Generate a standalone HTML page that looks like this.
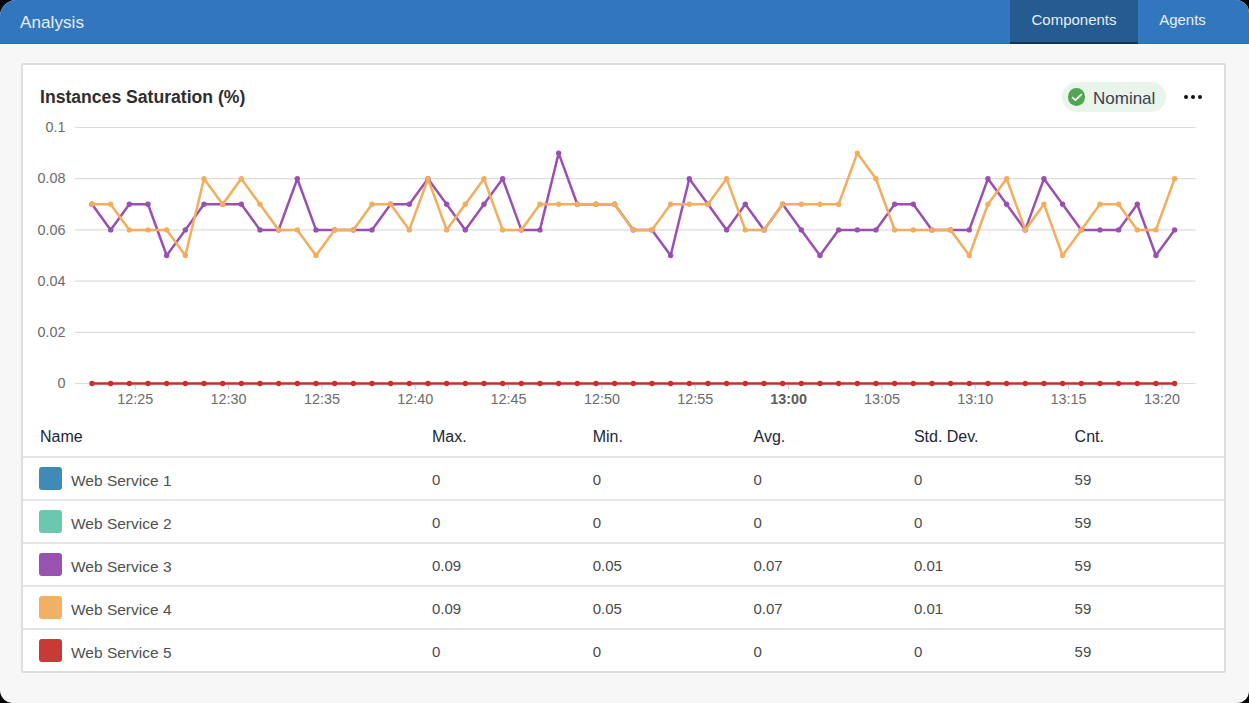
<!DOCTYPE html>
<html><head><meta charset="utf-8"><style>
html,body{margin:0;padding:0;background:#000;width:1249px;height:703px;overflow:hidden}
*{box-sizing:border-box}
#app{position:absolute;left:0;top:0;width:1249px;height:703px;background:#f7f7f7;border-radius:16px 13px 12px 13px;overflow:hidden;font-family:"Liberation Sans",sans-serif}
#hdr{position:absolute;left:0;top:0;width:1249px;height:44px;background:#3277bd;border-bottom:1px solid #2c6db3}
#title{position:absolute;left:20px;top:12px;font-size:17.2px;line-height:20px;color:#e6edf6}
.tab{position:absolute;top:0;height:44px;font-size:15px;line-height:20px;color:#e9eff7;padding-top:10.4px;text-align:center}
#t1{left:1010px;width:128px;background:#265b91;border-bottom:2px solid #12345a}
#t2{left:1138px;width:89px}
#card{position:absolute;left:21px;top:63px;width:1205px;height:610px;background:#fff;border:2px solid #dedede;border-radius:2px}
#ctitle{position:absolute;left:40px;top:87px;font-size:17.6px;line-height:20px;font-weight:bold;color:#2e2e2e}
#badge{position:absolute;left:1062px;top:82px;width:104px;height:30px;border-radius:15px;background:#e9f4ea}
#chk{position:absolute;left:1067.5px;top:88.3px;width:17.5px;height:17.5px;border-radius:50%;background:#52a653}
#nom{position:absolute;left:1093px;top:89px;font-size:17px;line-height:20px;color:#3a3f55}
.dot{position:absolute;top:95px;width:4px;height:4px;border-radius:50%;background:#111}
.th{position:absolute;top:427px;font-size:16px;line-height:20px;color:#23263a}
.row{position:absolute;left:23px;width:1201px;height:2px;background:#e6e6e6}
.sw{position:absolute;left:39px;width:23px;height:23px;border-radius:3px}
.nm{position:absolute;left:71px;font-size:15.5px;line-height:20px;padding-top:14px;color:#505050}
.val{position:absolute;font-size:15px;line-height:20px;padding-top:13px;color:#4a4a4a}
</style></head><body>
<div id="app">
<div id="hdr"><div id="title">Analysis</div>
<div class="tab" id="t1">Components</div><div class="tab" id="t2">Agents</div></div>
<div id="card"></div>
<div id="ctitle">Instances Saturation (%)</div>
<div id="badge"></div><div id="chk"><svg width="18" height="18" viewBox="0 0 18 18"><path d="M4.6 9.6 L7.5 12.2 L13.2 6.6" fill="none" stroke="#fff" stroke-width="1.7" stroke-linecap="round" stroke-linejoin="round"/></svg></div>
<div id="nom">Nominal</div>
<div class="dot" style="left:1184px"></div><div class="dot" style="left:1191px"></div><div class="dot" style="left:1198px"></div>
<svg width="1249" height="703" style="position:absolute;left:0;top:0">
<g><line x1="75" y1="383.50" x2="1195.5" y2="383.50" stroke="#dcdcdc" stroke-width="1.2"/><line x1="75" y1="332.30" x2="1195.5" y2="332.30" stroke="#dcdcdc" stroke-width="1.2"/><line x1="75" y1="281.10" x2="1195.5" y2="281.10" stroke="#dcdcdc" stroke-width="1.2"/><line x1="75" y1="229.90" x2="1195.5" y2="229.90" stroke="#dcdcdc" stroke-width="1.2"/><line x1="75" y1="178.70" x2="1195.5" y2="178.70" stroke="#dcdcdc" stroke-width="1.2"/><line x1="75" y1="127.50" x2="1195.5" y2="127.50" stroke="#dcdcdc" stroke-width="1.2"/><line x1="135.31" y1="385" x2="135.31" y2="389.5" stroke="#cfcfcf" stroke-width="1"/><line x1="228.63" y1="385" x2="228.63" y2="389.5" stroke="#cfcfcf" stroke-width="1"/><line x1="321.96" y1="385" x2="321.96" y2="389.5" stroke="#cfcfcf" stroke-width="1"/><line x1="415.29" y1="385" x2="415.29" y2="389.5" stroke="#cfcfcf" stroke-width="1"/><line x1="508.62" y1="385" x2="508.62" y2="389.5" stroke="#cfcfcf" stroke-width="1"/><line x1="601.94" y1="385" x2="601.94" y2="389.5" stroke="#cfcfcf" stroke-width="1"/><line x1="695.27" y1="385" x2="695.27" y2="389.5" stroke="#cfcfcf" stroke-width="1"/><line x1="788.60" y1="385" x2="788.60" y2="389.5" stroke="#cfcfcf" stroke-width="1"/><line x1="881.93" y1="385" x2="881.93" y2="389.5" stroke="#cfcfcf" stroke-width="1"/><line x1="975.26" y1="385" x2="975.26" y2="389.5" stroke="#cfcfcf" stroke-width="1"/><line x1="1068.58" y1="385" x2="1068.58" y2="389.5" stroke="#cfcfcf" stroke-width="1"/><line x1="1161.91" y1="385" x2="1161.91" y2="389.5" stroke="#cfcfcf" stroke-width="1"/></g>
<g font-family="Liberation Sans, sans-serif" font-size="14.4" fill="#6b6b6b"><text x="65.5" y="388.10" text-anchor="end">0</text><text x="65.5" y="336.90" text-anchor="end">0.02</text><text x="65.5" y="285.70" text-anchor="end">0.04</text><text x="65.5" y="234.50" text-anchor="end">0.06</text><text x="65.5" y="183.30" text-anchor="end">0.08</text><text x="65.5" y="132.10" text-anchor="end">0.1</text><text x="135.31" y="403.8" text-anchor="middle">12:25</text><text x="228.63" y="403.8" text-anchor="middle">12:30</text><text x="321.96" y="403.8" text-anchor="middle">12:35</text><text x="415.29" y="403.8" text-anchor="middle">12:40</text><text x="508.62" y="403.8" text-anchor="middle">12:45</text><text x="601.94" y="403.8" text-anchor="middle">12:50</text><text x="695.27" y="403.8" text-anchor="middle">12:55</text><text x="788.60" y="403.8" text-anchor="middle" font-weight="bold" fill="#5c5c5c">13:00</text><text x="881.93" y="403.8" text-anchor="middle">13:05</text><text x="975.26" y="403.8" text-anchor="middle">13:10</text><text x="1068.58" y="403.8" text-anchor="middle">13:15</text><text x="1161.91" y="403.8" text-anchor="middle">13:20</text></g>
<polyline points="92.00,204.30 110.67,229.90 129.33,204.30 148.00,204.30 166.66,255.50 185.33,229.90 203.99,204.30 222.66,204.30 241.32,204.30 259.99,229.90 278.66,229.90 297.32,178.70 315.99,229.90 334.65,229.90 353.32,229.90 371.98,229.90 390.65,204.30 409.31,204.30 427.98,178.70 446.64,204.30 465.31,229.90 483.98,204.30 502.64,178.70 521.31,229.90 539.97,229.90 558.64,153.10 577.30,204.30 595.97,204.30 614.63,204.30 633.30,229.90 651.97,229.90 670.63,255.50 689.30,178.70 707.96,204.30 726.63,229.90 745.29,204.30 763.96,229.90 782.62,204.30 801.29,229.90 819.96,255.50 838.62,229.90 857.29,229.90 875.95,229.90 894.62,204.30 913.28,204.30 931.95,229.90 950.61,229.90 969.28,229.90 987.94,178.70 1006.61,204.30 1025.28,229.90 1043.94,178.70 1062.61,204.30 1081.27,229.90 1099.94,229.90 1118.60,229.90 1137.27,204.30 1155.93,255.50 1174.60,229.90" fill="none" stroke="#9a50b1" stroke-width="2.5" stroke-linejoin="round"/><circle cx="92.00" cy="204.30" r="2.7" fill="#9a50b1"/><circle cx="110.67" cy="229.90" r="2.7" fill="#9a50b1"/><circle cx="129.33" cy="204.30" r="2.7" fill="#9a50b1"/><circle cx="148.00" cy="204.30" r="2.7" fill="#9a50b1"/><circle cx="166.66" cy="255.50" r="2.7" fill="#9a50b1"/><circle cx="185.33" cy="229.90" r="2.7" fill="#9a50b1"/><circle cx="203.99" cy="204.30" r="2.7" fill="#9a50b1"/><circle cx="222.66" cy="204.30" r="2.7" fill="#9a50b1"/><circle cx="241.32" cy="204.30" r="2.7" fill="#9a50b1"/><circle cx="259.99" cy="229.90" r="2.7" fill="#9a50b1"/><circle cx="278.66" cy="229.90" r="2.7" fill="#9a50b1"/><circle cx="297.32" cy="178.70" r="2.7" fill="#9a50b1"/><circle cx="315.99" cy="229.90" r="2.7" fill="#9a50b1"/><circle cx="334.65" cy="229.90" r="2.7" fill="#9a50b1"/><circle cx="353.32" cy="229.90" r="2.7" fill="#9a50b1"/><circle cx="371.98" cy="229.90" r="2.7" fill="#9a50b1"/><circle cx="390.65" cy="204.30" r="2.7" fill="#9a50b1"/><circle cx="409.31" cy="204.30" r="2.7" fill="#9a50b1"/><circle cx="427.98" cy="178.70" r="2.7" fill="#9a50b1"/><circle cx="446.64" cy="204.30" r="2.7" fill="#9a50b1"/><circle cx="465.31" cy="229.90" r="2.7" fill="#9a50b1"/><circle cx="483.98" cy="204.30" r="2.7" fill="#9a50b1"/><circle cx="502.64" cy="178.70" r="2.7" fill="#9a50b1"/><circle cx="521.31" cy="229.90" r="2.7" fill="#9a50b1"/><circle cx="539.97" cy="229.90" r="2.7" fill="#9a50b1"/><circle cx="558.64" cy="153.10" r="2.7" fill="#9a50b1"/><circle cx="577.30" cy="204.30" r="2.7" fill="#9a50b1"/><circle cx="595.97" cy="204.30" r="2.7" fill="#9a50b1"/><circle cx="614.63" cy="204.30" r="2.7" fill="#9a50b1"/><circle cx="633.30" cy="229.90" r="2.7" fill="#9a50b1"/><circle cx="651.97" cy="229.90" r="2.7" fill="#9a50b1"/><circle cx="670.63" cy="255.50" r="2.7" fill="#9a50b1"/><circle cx="689.30" cy="178.70" r="2.7" fill="#9a50b1"/><circle cx="707.96" cy="204.30" r="2.7" fill="#9a50b1"/><circle cx="726.63" cy="229.90" r="2.7" fill="#9a50b1"/><circle cx="745.29" cy="204.30" r="2.7" fill="#9a50b1"/><circle cx="763.96" cy="229.90" r="2.7" fill="#9a50b1"/><circle cx="782.62" cy="204.30" r="2.7" fill="#9a50b1"/><circle cx="801.29" cy="229.90" r="2.7" fill="#9a50b1"/><circle cx="819.96" cy="255.50" r="2.7" fill="#9a50b1"/><circle cx="838.62" cy="229.90" r="2.7" fill="#9a50b1"/><circle cx="857.29" cy="229.90" r="2.7" fill="#9a50b1"/><circle cx="875.95" cy="229.90" r="2.7" fill="#9a50b1"/><circle cx="894.62" cy="204.30" r="2.7" fill="#9a50b1"/><circle cx="913.28" cy="204.30" r="2.7" fill="#9a50b1"/><circle cx="931.95" cy="229.90" r="2.7" fill="#9a50b1"/><circle cx="950.61" cy="229.90" r="2.7" fill="#9a50b1"/><circle cx="969.28" cy="229.90" r="2.7" fill="#9a50b1"/><circle cx="987.94" cy="178.70" r="2.7" fill="#9a50b1"/><circle cx="1006.61" cy="204.30" r="2.7" fill="#9a50b1"/><circle cx="1025.28" cy="229.90" r="2.7" fill="#9a50b1"/><circle cx="1043.94" cy="178.70" r="2.7" fill="#9a50b1"/><circle cx="1062.61" cy="204.30" r="2.7" fill="#9a50b1"/><circle cx="1081.27" cy="229.90" r="2.7" fill="#9a50b1"/><circle cx="1099.94" cy="229.90" r="2.7" fill="#9a50b1"/><circle cx="1118.60" cy="229.90" r="2.7" fill="#9a50b1"/><circle cx="1137.27" cy="204.30" r="2.7" fill="#9a50b1"/><circle cx="1155.93" cy="255.50" r="2.7" fill="#9a50b1"/><circle cx="1174.60" cy="229.90" r="2.7" fill="#9a50b1"/><polyline points="92.00,204.30 110.67,204.30 129.33,229.90 148.00,229.90 166.66,229.90 185.33,255.50 203.99,178.70 222.66,204.30 241.32,178.70 259.99,204.30 278.66,229.90 297.32,229.90 315.99,255.50 334.65,229.90 353.32,229.90 371.98,204.30 390.65,204.30 409.31,229.90 427.98,178.70 446.64,229.90 465.31,204.30 483.98,178.70 502.64,229.90 521.31,229.90 539.97,204.30 558.64,204.30 577.30,204.30 595.97,204.30 614.63,204.30 633.30,229.90 651.97,229.90 670.63,204.30 689.30,204.30 707.96,204.30 726.63,178.70 745.29,229.90 763.96,229.90 782.62,204.30 801.29,204.30 819.96,204.30 838.62,204.30 857.29,153.10 875.95,178.70 894.62,229.90 913.28,229.90 931.95,229.90 950.61,229.90 969.28,255.50 987.94,204.30 1006.61,178.70 1025.28,229.90 1043.94,204.30 1062.61,255.50 1081.27,229.90 1099.94,204.30 1118.60,204.30 1137.27,229.90 1155.93,229.90 1174.60,178.70" fill="none" stroke="#f2ad5e" stroke-width="2.5" stroke-linejoin="round"/><circle cx="92.00" cy="204.30" r="2.7" fill="#f2ad5e"/><circle cx="110.67" cy="204.30" r="2.7" fill="#f2ad5e"/><circle cx="129.33" cy="229.90" r="2.7" fill="#f2ad5e"/><circle cx="148.00" cy="229.90" r="2.7" fill="#f2ad5e"/><circle cx="166.66" cy="229.90" r="2.7" fill="#f2ad5e"/><circle cx="185.33" cy="255.50" r="2.7" fill="#f2ad5e"/><circle cx="203.99" cy="178.70" r="2.7" fill="#f2ad5e"/><circle cx="222.66" cy="204.30" r="2.7" fill="#f2ad5e"/><circle cx="241.32" cy="178.70" r="2.7" fill="#f2ad5e"/><circle cx="259.99" cy="204.30" r="2.7" fill="#f2ad5e"/><circle cx="278.66" cy="229.90" r="2.7" fill="#f2ad5e"/><circle cx="297.32" cy="229.90" r="2.7" fill="#f2ad5e"/><circle cx="315.99" cy="255.50" r="2.7" fill="#f2ad5e"/><circle cx="334.65" cy="229.90" r="2.7" fill="#f2ad5e"/><circle cx="353.32" cy="229.90" r="2.7" fill="#f2ad5e"/><circle cx="371.98" cy="204.30" r="2.7" fill="#f2ad5e"/><circle cx="390.65" cy="204.30" r="2.7" fill="#f2ad5e"/><circle cx="409.31" cy="229.90" r="2.7" fill="#f2ad5e"/><circle cx="427.98" cy="178.70" r="2.7" fill="#f2ad5e"/><circle cx="446.64" cy="229.90" r="2.7" fill="#f2ad5e"/><circle cx="465.31" cy="204.30" r="2.7" fill="#f2ad5e"/><circle cx="483.98" cy="178.70" r="2.7" fill="#f2ad5e"/><circle cx="502.64" cy="229.90" r="2.7" fill="#f2ad5e"/><circle cx="521.31" cy="229.90" r="2.7" fill="#f2ad5e"/><circle cx="539.97" cy="204.30" r="2.7" fill="#f2ad5e"/><circle cx="558.64" cy="204.30" r="2.7" fill="#f2ad5e"/><circle cx="577.30" cy="204.30" r="2.7" fill="#f2ad5e"/><circle cx="595.97" cy="204.30" r="2.7" fill="#f2ad5e"/><circle cx="614.63" cy="204.30" r="2.7" fill="#f2ad5e"/><circle cx="633.30" cy="229.90" r="2.7" fill="#f2ad5e"/><circle cx="651.97" cy="229.90" r="2.7" fill="#f2ad5e"/><circle cx="670.63" cy="204.30" r="2.7" fill="#f2ad5e"/><circle cx="689.30" cy="204.30" r="2.7" fill="#f2ad5e"/><circle cx="707.96" cy="204.30" r="2.7" fill="#f2ad5e"/><circle cx="726.63" cy="178.70" r="2.7" fill="#f2ad5e"/><circle cx="745.29" cy="229.90" r="2.7" fill="#f2ad5e"/><circle cx="763.96" cy="229.90" r="2.7" fill="#f2ad5e"/><circle cx="782.62" cy="204.30" r="2.7" fill="#f2ad5e"/><circle cx="801.29" cy="204.30" r="2.7" fill="#f2ad5e"/><circle cx="819.96" cy="204.30" r="2.7" fill="#f2ad5e"/><circle cx="838.62" cy="204.30" r="2.7" fill="#f2ad5e"/><circle cx="857.29" cy="153.10" r="2.7" fill="#f2ad5e"/><circle cx="875.95" cy="178.70" r="2.7" fill="#f2ad5e"/><circle cx="894.62" cy="229.90" r="2.7" fill="#f2ad5e"/><circle cx="913.28" cy="229.90" r="2.7" fill="#f2ad5e"/><circle cx="931.95" cy="229.90" r="2.7" fill="#f2ad5e"/><circle cx="950.61" cy="229.90" r="2.7" fill="#f2ad5e"/><circle cx="969.28" cy="255.50" r="2.7" fill="#f2ad5e"/><circle cx="987.94" cy="204.30" r="2.7" fill="#f2ad5e"/><circle cx="1006.61" cy="178.70" r="2.7" fill="#f2ad5e"/><circle cx="1025.28" cy="229.90" r="2.7" fill="#f2ad5e"/><circle cx="1043.94" cy="204.30" r="2.7" fill="#f2ad5e"/><circle cx="1062.61" cy="255.50" r="2.7" fill="#f2ad5e"/><circle cx="1081.27" cy="229.90" r="2.7" fill="#f2ad5e"/><circle cx="1099.94" cy="204.30" r="2.7" fill="#f2ad5e"/><circle cx="1118.60" cy="204.30" r="2.7" fill="#f2ad5e"/><circle cx="1137.27" cy="229.90" r="2.7" fill="#f2ad5e"/><circle cx="1155.93" cy="229.90" r="2.7" fill="#f2ad5e"/><circle cx="1174.60" cy="178.70" r="2.7" fill="#f2ad5e"/><polyline points="92.00,383.50 110.67,383.50 129.33,383.50 148.00,383.50 166.66,383.50 185.33,383.50 203.99,383.50 222.66,383.50 241.32,383.50 259.99,383.50 278.66,383.50 297.32,383.50 315.99,383.50 334.65,383.50 353.32,383.50 371.98,383.50 390.65,383.50 409.31,383.50 427.98,383.50 446.64,383.50 465.31,383.50 483.98,383.50 502.64,383.50 521.31,383.50 539.97,383.50 558.64,383.50 577.30,383.50 595.97,383.50 614.63,383.50 633.30,383.50 651.97,383.50 670.63,383.50 689.30,383.50 707.96,383.50 726.63,383.50 745.29,383.50 763.96,383.50 782.62,383.50 801.29,383.50 819.96,383.50 838.62,383.50 857.29,383.50 875.95,383.50 894.62,383.50 913.28,383.50 931.95,383.50 950.61,383.50 969.28,383.50 987.94,383.50 1006.61,383.50 1025.28,383.50 1043.94,383.50 1062.61,383.50 1081.27,383.50 1099.94,383.50 1118.60,383.50 1137.27,383.50 1155.93,383.50 1174.60,383.50" fill="none" stroke="#c9302c" stroke-width="2.5" stroke-linejoin="round"/><circle cx="92.00" cy="383.50" r="2.7" fill="#c9302c"/><circle cx="110.67" cy="383.50" r="2.7" fill="#c9302c"/><circle cx="129.33" cy="383.50" r="2.7" fill="#c9302c"/><circle cx="148.00" cy="383.50" r="2.7" fill="#c9302c"/><circle cx="166.66" cy="383.50" r="2.7" fill="#c9302c"/><circle cx="185.33" cy="383.50" r="2.7" fill="#c9302c"/><circle cx="203.99" cy="383.50" r="2.7" fill="#c9302c"/><circle cx="222.66" cy="383.50" r="2.7" fill="#c9302c"/><circle cx="241.32" cy="383.50" r="2.7" fill="#c9302c"/><circle cx="259.99" cy="383.50" r="2.7" fill="#c9302c"/><circle cx="278.66" cy="383.50" r="2.7" fill="#c9302c"/><circle cx="297.32" cy="383.50" r="2.7" fill="#c9302c"/><circle cx="315.99" cy="383.50" r="2.7" fill="#c9302c"/><circle cx="334.65" cy="383.50" r="2.7" fill="#c9302c"/><circle cx="353.32" cy="383.50" r="2.7" fill="#c9302c"/><circle cx="371.98" cy="383.50" r="2.7" fill="#c9302c"/><circle cx="390.65" cy="383.50" r="2.7" fill="#c9302c"/><circle cx="409.31" cy="383.50" r="2.7" fill="#c9302c"/><circle cx="427.98" cy="383.50" r="2.7" fill="#c9302c"/><circle cx="446.64" cy="383.50" r="2.7" fill="#c9302c"/><circle cx="465.31" cy="383.50" r="2.7" fill="#c9302c"/><circle cx="483.98" cy="383.50" r="2.7" fill="#c9302c"/><circle cx="502.64" cy="383.50" r="2.7" fill="#c9302c"/><circle cx="521.31" cy="383.50" r="2.7" fill="#c9302c"/><circle cx="539.97" cy="383.50" r="2.7" fill="#c9302c"/><circle cx="558.64" cy="383.50" r="2.7" fill="#c9302c"/><circle cx="577.30" cy="383.50" r="2.7" fill="#c9302c"/><circle cx="595.97" cy="383.50" r="2.7" fill="#c9302c"/><circle cx="614.63" cy="383.50" r="2.7" fill="#c9302c"/><circle cx="633.30" cy="383.50" r="2.7" fill="#c9302c"/><circle cx="651.97" cy="383.50" r="2.7" fill="#c9302c"/><circle cx="670.63" cy="383.50" r="2.7" fill="#c9302c"/><circle cx="689.30" cy="383.50" r="2.7" fill="#c9302c"/><circle cx="707.96" cy="383.50" r="2.7" fill="#c9302c"/><circle cx="726.63" cy="383.50" r="2.7" fill="#c9302c"/><circle cx="745.29" cy="383.50" r="2.7" fill="#c9302c"/><circle cx="763.96" cy="383.50" r="2.7" fill="#c9302c"/><circle cx="782.62" cy="383.50" r="2.7" fill="#c9302c"/><circle cx="801.29" cy="383.50" r="2.7" fill="#c9302c"/><circle cx="819.96" cy="383.50" r="2.7" fill="#c9302c"/><circle cx="838.62" cy="383.50" r="2.7" fill="#c9302c"/><circle cx="857.29" cy="383.50" r="2.7" fill="#c9302c"/><circle cx="875.95" cy="383.50" r="2.7" fill="#c9302c"/><circle cx="894.62" cy="383.50" r="2.7" fill="#c9302c"/><circle cx="913.28" cy="383.50" r="2.7" fill="#c9302c"/><circle cx="931.95" cy="383.50" r="2.7" fill="#c9302c"/><circle cx="950.61" cy="383.50" r="2.7" fill="#c9302c"/><circle cx="969.28" cy="383.50" r="2.7" fill="#c9302c"/><circle cx="987.94" cy="383.50" r="2.7" fill="#c9302c"/><circle cx="1006.61" cy="383.50" r="2.7" fill="#c9302c"/><circle cx="1025.28" cy="383.50" r="2.7" fill="#c9302c"/><circle cx="1043.94" cy="383.50" r="2.7" fill="#c9302c"/><circle cx="1062.61" cy="383.50" r="2.7" fill="#c9302c"/><circle cx="1081.27" cy="383.50" r="2.7" fill="#c9302c"/><circle cx="1099.94" cy="383.50" r="2.7" fill="#c9302c"/><circle cx="1118.60" cy="383.50" r="2.7" fill="#c9302c"/><circle cx="1137.27" cy="383.50" r="2.7" fill="#c9302c"/><circle cx="1155.93" cy="383.50" r="2.7" fill="#c9302c"/><circle cx="1174.60" cy="383.50" r="2.7" fill="#c9302c"/>
</svg>
<div class="th" style="left:40px">Name</div><div class="th" style="left:432px">Max.</div><div class="th" style="left:592.7px">Min.</div><div class="th" style="left:753.5px">Avg.</div><div class="th" style="left:913.9px">Std. Dev.</div><div class="th" style="left:1074.6px">Cnt.</div>
<div class="row" style="top:456px"></div><div class="sw" style="top:467px;background:#3f8bb6"></div><div class="nm" style="top:457px">Web Service 1</div><div class="val" style="top:457px;left:432px">0</div><div class="val" style="top:457px;left:592.7px">0</div><div class="val" style="top:457px;left:753.5px">0</div><div class="val" style="top:457px;left:913.9px">0</div><div class="val" style="top:457px;left:1074.6px">59</div><div class="row" style="top:499px"></div><div class="sw" style="top:510px;background:#6cc7b1"></div><div class="nm" style="top:500px">Web Service 2</div><div class="val" style="top:500px;left:432px">0</div><div class="val" style="top:500px;left:592.7px">0</div><div class="val" style="top:500px;left:753.5px">0</div><div class="val" style="top:500px;left:913.9px">0</div><div class="val" style="top:500px;left:1074.6px">59</div><div class="row" style="top:542px"></div><div class="sw" style="top:553px;background:#9a52b0"></div><div class="nm" style="top:543px">Web Service 3</div><div class="val" style="top:543px;left:432px">0.09</div><div class="val" style="top:543px;left:592.7px">0.05</div><div class="val" style="top:543px;left:753.5px">0.07</div><div class="val" style="top:543px;left:913.9px">0.01</div><div class="val" style="top:543px;left:1074.6px">59</div><div class="row" style="top:585px"></div><div class="sw" style="top:596px;background:#f2b065"></div><div class="nm" style="top:586px">Web Service 4</div><div class="val" style="top:586px;left:432px">0.09</div><div class="val" style="top:586px;left:592.7px">0.05</div><div class="val" style="top:586px;left:753.5px">0.07</div><div class="val" style="top:586px;left:913.9px">0.01</div><div class="val" style="top:586px;left:1074.6px">59</div><div class="row" style="top:628px"></div><div class="sw" style="top:639px;background:#c83a36"></div><div class="nm" style="top:629px">Web Service 5</div><div class="val" style="top:629px;left:432px">0</div><div class="val" style="top:629px;left:592.7px">0</div><div class="val" style="top:629px;left:753.5px">0</div><div class="val" style="top:629px;left:913.9px">0</div><div class="val" style="top:629px;left:1074.6px">59</div>
</div>
</body></html>
